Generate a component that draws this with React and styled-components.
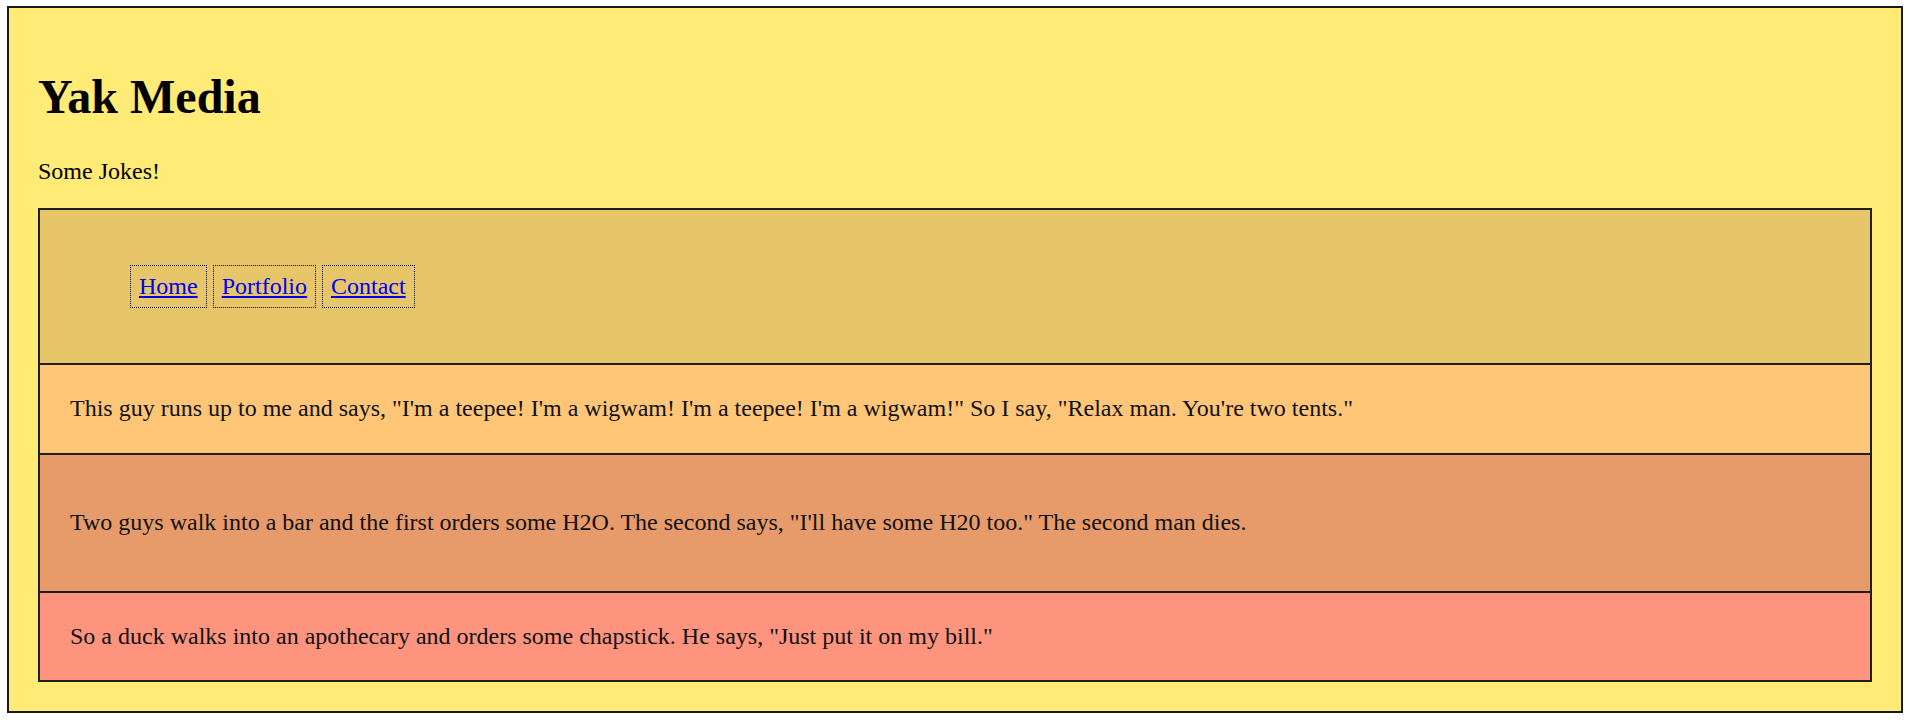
import React from "react";
import styled, { createGlobalStyle } from "styled-components";

const Global = createGlobalStyle`
  html, body { margin: 0; padding: 0; background: #ffffff; }
  body {
    padding: 6px 7px 8px 7px;
    font-family: "Liberation Serif", "Times New Roman", serif;
    font-size: 24px;
    color: #000;
  }
`;

const Page = styled.div`
  background: #ffeb76;
  border: 2px solid #1a1a1a;
  padding: 0 29px 29px 29px;
`;

const Title = styled.h1`
  margin: 61px 0 34px 0;
  font-size: 48px;
  font-weight: bold;
  line-height: 1.15;
`;

const Tagline = styled.p`
  margin: 0 0 22px 0;
  font-size: 24px;
  line-height: 1.15;
`;

const Stack = styled.div`
  border: 2px solid #1f1f1f;
  display: flex;
  flex-direction: column;
`;

const Nav = styled.nav`
  background: #e7c66a;
  padding: 55px 0 55px 90px;
`;

const NavList = styled.ul`
  list-style: none;
  margin: 0;
  padding: 0;
  display: flex;
  gap: 6px;
`;

const NavLink = styled.a`
  display: block;
  border: 1px dotted #000;
  padding: 7px 8px;
  color: #0000ee;
  text-decoration: underline;
  font-size: 24px;
  line-height: 1.15;
`;

const Joke = styled.div`
  background: ${(p) => p.$bg};
  border-top: 2px solid #1f1f1f;
  padding: ${(p) => p.$pad}px 30px;
  font-size: 24px;
  line-height: 1.15;
  color: #111;
`;

const jokes = [
  {
    bg: "#ffc677",
    pad: 30,
    text:
      'This guy runs up to me and says, "I\'m a teepee! I\'m a wigwam! I\'m a teepee! I\'m a wigwam!" So I say, "Relax man. You\'re two tents."',
  },
  {
    bg: "#e79b6b",
    pad: 54,
    text:
      'Two guys walk into a bar and the first orders some H2O. The second says, "I\'ll have some H20 too." The second man dies.',
  },
  {
    bg: "#ff947e",
    pad: 30,
    text:
      'So a duck walks into an apothecary and orders some chapstick. He says, "Just put it on my bill."',
  },
];

export default function App() {
  return (
    <>
      <Global />
      <Page>
        <Title>Yak Media</Title>
        <Tagline>Some Jokes!</Tagline>
        <Stack>
          <Nav>
            <NavList>
              <li><NavLink href="#">Home</NavLink></li>
              <li><NavLink href="#">Portfolio</NavLink></li>
              <li><NavLink href="#">Contact</NavLink></li>
            </NavList>
          </Nav>
          {jokes.map((j, i) => (
            <Joke key={i} $bg={j.bg} $pad={j.pad}>
              {j.text}
            </Joke>
          ))}
        </Stack>
      </Page>
    </>
  );
}
